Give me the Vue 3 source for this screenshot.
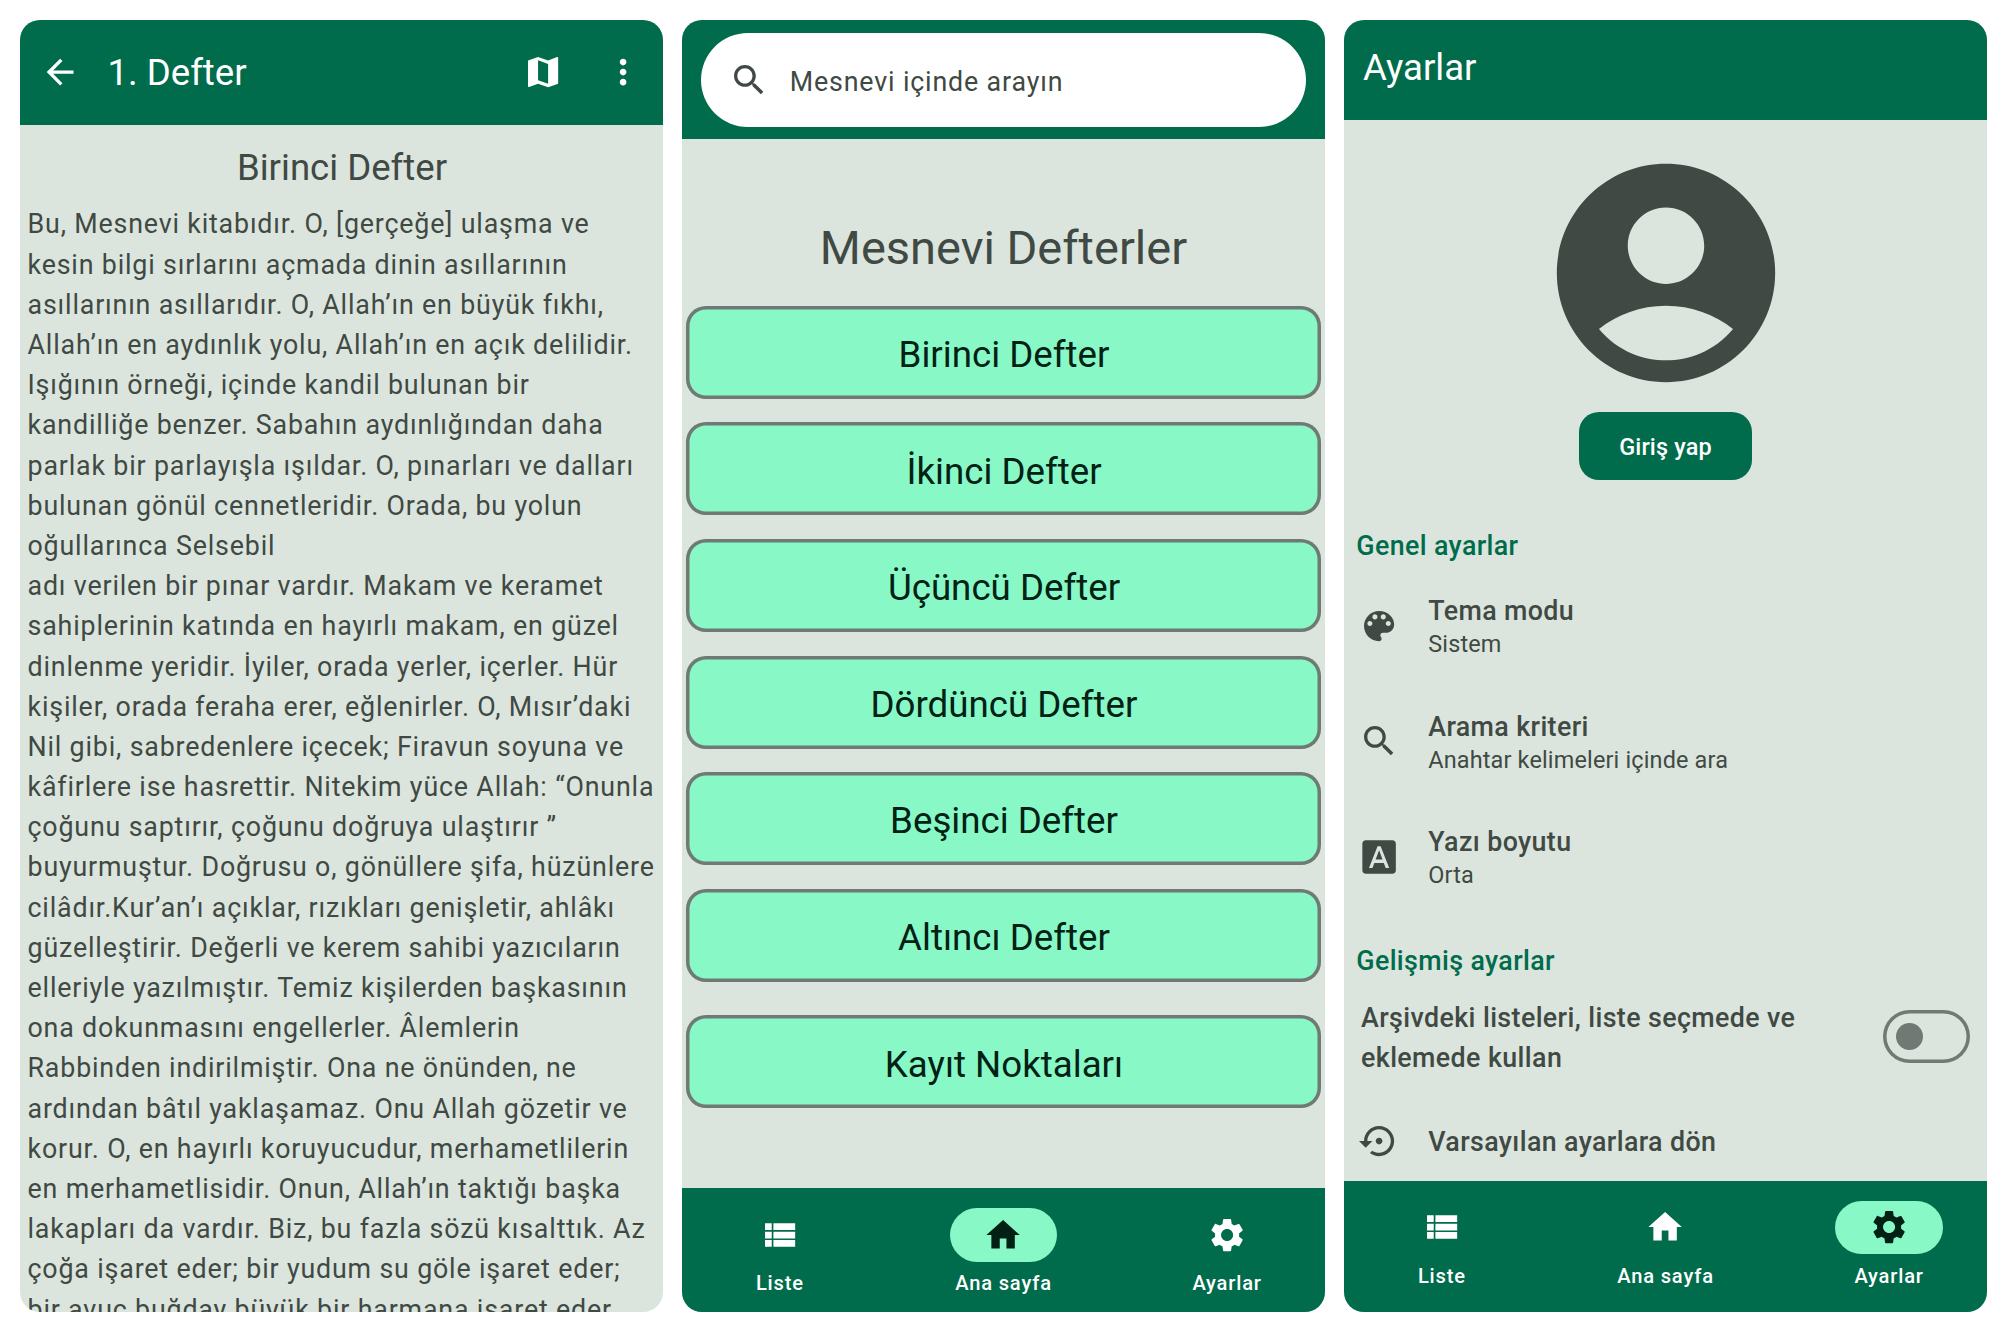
<script setup>
const icons = {
  back: 'M20,11H7.83l5.59,-5.59L12,4l-8,8 8,8 1.41,-1.41L7.83,13H20v-2z',
  map: 'M20.5,3l-0.16,0.03L15,5.1 9,3 3.36,4.9c-0.21,0.07 -0.36,0.25 -0.36,0.48V20.5c0,0.28 0.22,0.5 0.5,0.5l0.16,-0.03L9,18.9l6,2.1 5.64,-1.9c0.21,-0.07 0.36,-0.25 0.36,-0.48V3.5c0,-0.28 -0.22,-0.5 -0.5,-0.5zM15,19l-6,-2.11V5l6,2.11V19z',
  more: 'M12,8c1.1,0 2,-0.9 2,-2s-0.9,-2 -2,-2 -2,0.9 -2,2 0.9,2 2,2zM12,10c-1.1,0 -2,0.9 -2,2s0.9,2 2,2 2,-0.9 2,-2 -0.9,-2 -2,-2zM12,16c-1.1,0 -2,0.9 -2,2s0.9,2 2,2 2,-0.9 2,-2 -0.9,-2 -2,-2z',
  search: 'M15.5,14h-0.79l-0.28,-0.27C15.41,12.59 16,11.11 16,9.5 16,5.91 13.09,3 9.5,3S3,5.91 3,9.5 5.91,16 9.5,16c1.61,0 3.09,-0.59 4.23,-1.57l0.27,0.28v0.79l5,4.99L20.49,19l-4.99,-5zM9.5,14C7.01,14 5,11.99 5,9.5S7.01,5 9.5,5 14,7.01 14,9.5 11.99,14 9.5,14z',
  list: 'M3,14h4v-4H3v4zM3,19h4v-4H3v4zM3,9h4V5H3v4zM8,14h13v-4H8v4zM8,19h13v-4H8v4zM8,5v4h13V5H8z',
  home: 'M10,20v-6h4v6h5v-8h3L12,3 2,12h3v8z',
  settings: 'M19.14,12.94c0.04,-0.3 0.06,-0.61 0.06,-0.94 0,-0.32 -0.02,-0.64 -0.07,-0.94l2.03,-1.58c0.18,-0.14 0.23,-0.41 0.12,-0.61l-1.92,-3.32c-0.12,-0.22 -0.37,-0.29 -0.59,-0.22l-2.39,0.96c-0.5,-0.38 -1.03,-0.7 -1.62,-0.94L14.4,2.81c-0.04,-0.24 -0.24,-0.41 -0.48,-0.41h-3.84c-0.24,0 -0.43,0.17 -0.47,0.41L9.25,5.35C8.66,5.59 8.12,5.92 7.63,6.29L5.24,5.33c-0.22,-0.08 -0.47,0 -0.59,0.22L2.74,8.87C2.62,9.08 2.66,9.34 2.86,9.48l2.03,1.58C4.84,11.36 4.8,11.69 4.8,12s0.02,0.64 0.07,0.94l-2.03,1.58c-0.18,0.14 -0.23,0.41 -0.12,0.61l1.92,3.32c0.12,0.22 0.37,0.29 0.59,0.22l2.39,-0.96c0.5,0.38 1.03,0.7 1.62,0.94l0.36,2.54c0.05,0.24 0.24,0.41 0.48,0.41h3.84c0.24,0 0.44,-0.17 0.47,-0.41l0.36,-2.54c0.59,-0.24 1.13,-0.56 1.62,-0.94l2.39,0.96c0.22,0.08 0.47,0 0.59,-0.22l1.92,-3.32c0.12,-0.22 0.07,-0.47 -0.12,-0.61L19.14,12.94zM12,15.6c-1.98,0 -3.6,-1.62 -3.6,-3.6s1.62,-3.6 3.6,-3.6 3.6,1.62 3.6,3.6 -1.62,3.6 -3.6,3.6z',
  account: 'M12,2C6.48,2 2,6.48 2,12s4.48,10 10,10 10,-4.48 10,-10S17.52,2 12,2zM12,6c1.93,0 3.5,1.57 3.5,3.5S13.93,13 12,13s-3.5,-1.57 -3.5,-3.5S10.07,6 12,6zM12,20c-2.03,0 -4.43,-0.82 -6.14,-2.88C7.55,15.8 9.68,15 12,15s4.45,0.8 6.14,2.12C16.43,19.18 14.03,20 12,20z',
  palette: 'M12,3c-4.97,0 -9,4.03 -9,9s4.03,9 9,9c0.83,0 1.5,-0.67 1.5,-1.5 0,-0.39 -0.15,-0.74 -0.39,-1.01 -0.23,-0.26 -0.38,-0.61 -0.38,-0.99 0,-0.83 0.67,-1.5 1.5,-1.5H16c2.76,0 5,-2.24 5,-5 0,-4.42 -4.03,-8 -9,-8zM6.5,12c-0.83,0 -1.5,-0.67 -1.5,-1.5S5.67,9 6.5,9 8,9.67 8,10.5 7.33,12 6.5,12zM9.5,8C8.67,8 8,7.33 8,6.5S8.67,5 9.5,5s1.5,0.67 1.5,1.5S10.33,8 9.5,8zM14.5,8c-0.83,0 -1.5,-0.67 -1.5,-1.5S13.67,5 14.5,5s1.5,0.67 1.5,1.5S15.33,8 14.5,8zM17.5,12c-0.83,0 -1.5,-0.67 -1.5,-1.5S16.67,9 17.5,9s1.5,0.67 1.5,1.5 -0.67,1.5 -1.5,1.5z',
  font: 'M9.93,13.5h4.14L12,7.98zM20,2H4c-1.1,0 -2,0.9 -2,2v16c0,1.1 0.9,2 2,2h16c1.1,0 2,-0.9 2,-2V4c0,-1.1 -0.9,-2 -2,-2zM15.95,18.5l-1.14,-3H9.17l-1.12,3H5.96l5.11,-13h1.86l5.11,13h-2.09z',
  restore: 'M14,12c0,-1.1 -0.9,-2 -2,-2s-2,0.9 -2,2 0.9,2 2,2 2,-0.9 2,-2zM12,3c-4.97,0 -9,4.03 -9,9H0l4,4 4,-4H5c0,-3.87 3.13,-7 7,-7s7,3.13 7,7 -3.13,7 -7,7c-1.51,0 -2.91,-0.49 -4.06,-1.3l-1.42,1.44C8.04,20.3 9.94,21 12,21c4.97,0 9,-4.03 9,-9s-4.03,-9 -9,-9z',
}

const lines = [
  'Bu, Mesnevi kitabıdır. O, [gerçeğe] ulaşma ve',
  'kesin bilgi sırlarını açmada dinin asıllarının',
  'asıllarının asıllarıdır. O, Allah’ın en büyük fıkhı,',
  'Allah’ın en aydınlık yolu, Allah’ın en açık delilidir.',
  'Işığının örneği, içinde kandil bulunan bir',
  'kandilliğe benzer. Sabahın aydınlığından daha',
  'parlak bir parlayışla ışıldar. O, pınarları ve dalları',
  'bulunan gönül cennetleridir. Orada, bu yolun',
  'oğullarınca Selsebil',
  'adı verilen bir pınar vardır. Makam ve keramet',
  'sahiplerinin katında en hayırlı makam, en güzel',
  'dinlenme yeridir. İyiler, orada yerler, içerler. Hür',
  'kişiler, orada feraha erer, eğlenirler. O, Mısır’daki',
  'Nil gibi, sabredenlere içecek; Firavun soyuna ve',
  'kâfirlere ise hasrettir. Nitekim yüce Allah: “Onunla',
  'çoğunu saptırır, çoğunu doğruya ulaştırır ”',
  'buyurmuştur. Doğrusu o, gönüllere şifa, hüzünlere',
  'cilâdır.Kur’an’ı açıklar, rızıkları genişletir, ahlâkı',
  'güzelleştirir. Değerli ve kerem sahibi yazıcıların',
  'elleriyle yazılmıştır. Temiz kişilerden başkasının',
  'ona dokunmasını engellerler. Âlemlerin',
  'Rabbinden indirilmiştir. Ona ne önünden, ne',
  'ardından bâtıl yaklaşamaz. Onu Allah gözetir ve',
  'korur. O, en hayırlı koruyucudur, merhametlilerin',
  'en merhametlisidir. Onun, Allah’ın taktığı başka',
  'lakapları da vardır. Biz, bu fazla sözü kısalttık. Az',
  'çoğa işaret eder; bir yudum su göle işaret eder;',
  'bir avuç buğday büyük bir harmana işaret eder.',
]

const books = [
  'Birinci Defter',
  'İkinci Defter',
  'Üçüncü Defter',
  'Dördüncü Defter',
  'Beşinci Defter',
  'Altıncı Defter',
  'Kayıt Noktaları',
]

const nav = [
  { icon: 'list', label: 'Liste' },
  { icon: 'home', label: 'Ana sayfa' },
  { icon: 'settings', label: 'Ayarlar' },
]

const general = [
  { icon: 'palette', title: 'Tema modu', value: 'Sistem' },
  { icon: 'search', title: 'Arama kriteri', value: 'Anahtar kelimeleri içinde ara' },
  { icon: 'font', title: 'Yazı boyutu', value: 'Orta' },
]
</script>

<template>
  <div class="board">
    <section class="phone reader">
      <header class="bar reader-bar">
        <svg class="icon" viewBox="0 0 24 24"><path :d="icons.back" /></svg>
        <h1 class="bar-title">1. Defter</h1>
        <svg class="icon" viewBox="0 0 24 24"><path :d="icons.map" /></svg>
        <svg class="icon" viewBox="0 0 24 24"><path :d="icons.more" /></svg>
      </header>
      <h2 class="chapter">Birinci Defter</h2>
      <div class="text">
        <div v-for="(line, i) in lines" :key="i">{{ line }}</div>
      </div>
    </section>

    <section class="phone">
      <header class="bar search-bar">
        <div class="search">
          <svg class="icon" viewBox="0 0 24 24"><path :d="icons.search" /></svg>
          <span class="hint">Mesnevi içinde arayın</span>
        </div>
      </header>
      <h2 class="books-title">Mesnevi Defterler</h2>
      <div class="books">
        <button v-for="b in books" :key="b" class="book">{{ b }}</button>
      </div>
      <nav class="nav home-nav">
        <div v-for="n in nav" :key="n.icon" class="nav-item">
          <span class="pill" :class="{ active: n.icon === 'home' }">
            <svg class="icon" viewBox="0 0 24 24"><path :d="icons[n.icon]" /></svg>
          </span>
          <span class="nav-label">{{ n.label }}</span>
        </div>
      </nav>
    </section>

    <section class="phone">
      <header class="bar settings-bar">
        <h1 class="bar-title">Ayarlar</h1>
      </header>
      <div class="profile">
        <svg class="avatar" viewBox="0 0 24 24"><path :d="icons.account" /></svg>
        <button class="login">Giriş yap</button>
      </div>
      <h3 class="section general">Genel ayarlar</h3>
      <div class="rows">
        <div v-for="r in general" :key="r.title" class="row">
          <svg class="icon" viewBox="0 0 24 24"><path :d="icons[r.icon]" /></svg>
          <div>
            <div class="row-title">{{ r.title }}</div>
            <div class="row-value">{{ r.value }}</div>
          </div>
        </div>
      </div>
      <h3 class="section advanced">Gelişmiş ayarlar</h3>
      <div class="option">
        <div class="option-text">Arşivdeki listeleri, liste seçmede ve<br />eklemede kullan</div>
        <span class="switch"><span class="thumb"></span></span>
      </div>
      <div class="reset">
        <svg class="icon" viewBox="0 0 24 24"><path :d="icons.restore" /></svg>
        <span class="reset-text">Varsayılan ayarlara dön</span>
      </div>
      <nav class="nav settings-nav">
        <div v-for="n in nav" :key="n.icon" class="nav-item">
          <span class="pill" :class="{ active: n.icon === 'settings' }">
            <svg class="icon" viewBox="0 0 24 24"><path :d="icons[n.icon]" /></svg>
          </span>
          <span class="nav-label">{{ n.label }}</span>
        </div>
      </nav>
    </section>
  </div>
</template>

<style>
body {
  margin: 0;
  background: #fff;
}
</style>

<style scoped>
.board {
  box-sizing: border-box;
  width: 2007px;
  height: 1332px;
  padding: 20px;
  display: flex;
  gap: 19px;
  font-family: Roboto, "Noto Sans", sans-serif;
  color: #404943;
}
.phone {
  width: 643px;
  height: 1292px;
  flex: none;
  display: flex;
  flex-direction: column;
  overflow: hidden;
  border-radius: 20px;
  background: #dbe5dd;
}
h1,
h2,
h3 {
  margin: 0;
  font-weight: 400;
}
.icon {
  width: 40.2px;
  height: 40.2px;
  flex: none;
  fill: currentColor;
}
.bar {
  box-sizing: border-box;
  flex: none;
  display: flex;
  background: #006c4c;
  color: #fff;
}
.bar-title {
  flex: 1;
  font-size: 36.6px;
  line-height: 46.9px;
}
.reader-bar {
  height: 105.3px;
  padding: 0 20.2px 1.5px;
  align-items: center;
  gap: 39.6px;
}
.reader-bar .bar-title {
  margin-left: -12.5px;
  padding-top: 4px;
}
.chapter {
  flex: none;
  margin-top: 19px;
  padding-left: 1px;
  font-size: 36.6px;
  line-height: 47px;
  text-align: center;
}
.text {
  margin-top: 13.2px;
  padding-left: 7.5px;
  font-size: 26.8px;
  line-height: 40.19px;
  letter-spacing: 0.83px;
  white-space: nowrap;
}
.search-bar {
  height: 118.8px;
  padding: 13.4px 19px 0 19.4px;
}
.search {
  box-sizing: border-box;
  flex: 1;
  height: 93.8px;
  padding-left: 27.2px;
  display: flex;
  align-items: center;
  gap: 21px;
  border-radius: 47px;
  background: #fff;
  color: #404943;
}
.hint {
  padding-top: 4px;
  font-size: 26.8px;
  letter-spacing: 0.84px;
}
.books-title {
  flex: none;
  margin-top: 79.4px;
  font-size: 47px;
  line-height: 60px;
  text-align: center;
}
.books {
  flex: 1;
  margin-top: 27.6px;
  padding: 0 4px;
  display: flex;
  flex-direction: column;
  gap: 23.5px;
}
.book {
  box-sizing: border-box;
  flex: none;
  height: 93.1px;
  padding: 4.5px 0 0 1px;
  border: 0;
  box-shadow: inset 0 0 0 3.5px #707973;
  border-radius: 20px;
  background: #89f8c7;
  color: #002114;
  font: 400 36.7px/47px Roboto, "Noto Sans", sans-serif;
}
.book:last-child {
  margin-top: 10px;
}
.nav {
  box-sizing: border-box;
  flex: none;
  padding-top: 20px;
  display: flex;
  gap: 27.8px;
  background: #006c4c;
  color: #fff;
}
.home-nav {
  height: 123.7px;
}
.settings-nav {
  height: 131.3px;
  margin-top: auto;
}
.nav-item {
  flex: 1;
  display: flex;
  flex-direction: column;
  align-items: center;
}
.pill {
  width: 107.2px;
  height: 53.6px;
  display: flex;
  align-items: center;
  justify-content: center;
  border-radius: 27px;
}
.pill.active {
  background: #89f8c7;
  color: #002114;
}
.nav-label {
  margin-top: 8.3px;
  font-size: 20.1px;
  font-weight: 500;
  line-height: 27px;
  letter-spacing: 0.84px;
}
.settings-bar {
  height: 100.2px;
  padding: 25.3px 19px 0;
}
.profile {
  margin-top: 21.5px;
  display: flex;
  flex-direction: column;
  align-items: center;
}
.avatar {
  width: 262px;
  height: 262px;
  fill: #404943;
}
.login {
  width: 173.6px;
  height: 67.4px;
  margin-top: 8.5px;
  padding: 4px 0 0;
  border: 0;
  border-radius: 20px;
  background: #006c4c;
  color: #fff;
  font: 500 23.44px/33px Roboto, "Noto Sans", sans-serif;
  letter-spacing: 0.17px;
}
.section {
  flex: none;
  padding-left: 12.3px;
  font-size: 26.8px;
  font-weight: 500;
  line-height: 40.2px;
  letter-spacing: 0.38px;
  color: #006c4c;
}
.general {
  margin-top: 46.5px;
}
.rows {
  margin-top: 27.9px;
  padding-left: 15.2px;
  display: flex;
  flex-direction: column;
  gap: 48.2px;
}
.row {
  display: flex;
  align-items: center;
  gap: 28.9px;
}
.row .icon {
  margin-bottom: 4px;
}
.row-title {
  font-size: 26.8px;
  font-weight: 500;
  line-height: 34px;
  letter-spacing: 0.38px;
}
.row-value {
  font-size: 23.44px;
  line-height: 33.4px;
  letter-spacing: 0.16px;
}
.advanced {
  margin-top: 48.4px;
}
.option {
  margin-top: 16.8px;
  padding: 0 17.2px 0 17px;
  display: flex;
  align-items: center;
  justify-content: space-between;
}
.option-text {
  font-size: 26.8px;
  font-weight: 500;
  line-height: 40.2px;
  letter-spacing: 0.4px;
}
.switch {
  box-sizing: border-box;
  width: 87px;
  height: 53.6px;
  margin-bottom: 4px;
  padding-left: 13.4px;
  display: flex;
  align-items: center;
  box-shadow: inset 0 0 0 3.5px #707973;
  border-radius: 27px;
}
.thumb {
  width: 26.8px;
  height: 26.8px;
  border-radius: 50%;
  background: #707973;
}
.reset {
  margin-top: 42px;
  padding-left: 15.2px;
  display: flex;
  align-items: center;
  gap: 28.9px;
}
.reset-text {
  padding-top: 2.5px;
  font-size: 26.8px;
  font-weight: 500;
  letter-spacing: 0.38px;
}
</style>
